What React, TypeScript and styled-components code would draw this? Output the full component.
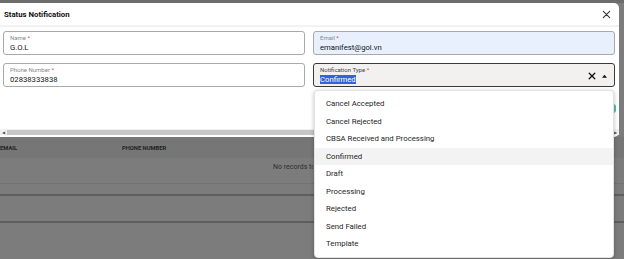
import React from "react";
import styled, { createGlobalStyle } from "styled-components";

const GlobalStyle = createGlobalStyle`
  html, body {
    margin: 0;
    padding: 0;
    background: #7c7c7c;
  }
  body {
    font-family: Roboto, "Liberation Sans", Arial, sans-serif;
  }
`;

const notificationTypes = [
  "Cancel Accepted",
  "Cancel Rejected",
  "CBSA Received and Processing",
  "Confirmed",
  "Draft",
  "Processing",
  "Rejected",
  "Send Failed",
  "Template",
];

const Screen = styled.div`
  position: relative;
  width: 624px;
  height: 259px;
  overflow: hidden;
  background: #7c7c7c;
  display: flex;
  flex-direction: column;
`;

const TopStrip = styled.div`
  height: 3px;
  background: #6c6c6c;
`;

const Modal = styled.div`
  width: 619px;
  height: 134px;
  background: #ffffff;
  border-radius: 0 5px 5px 0;
  display: flex;
  flex-direction: column;
`;

const Header = styled.div`
  height: 22px;
  display: flex;
  align-items: center;
  justify-content: space-between;
  padding: 0 8px 0 4px;
  border-bottom: 2px solid #f2f2f2;
`;

const Title = styled.div`
  font-size: 7.8px;
  font-weight: 700;
  color: #111;
`;

const CloseButton = styled.div`
  display: flex;
  align-items: center;
  color: #333;
`;

const Body = styled.div`
  display: grid;
  grid-template-columns: 302px 302px;
  column-gap: 8px;
  row-gap: 8px;
  padding: 4px 3px 0;
`;

const Field = styled.div<{ $tone?: "autofill" | "focus" }>`
  box-sizing: border-box;
  height: 24px;
  padding: 2px 6px 0;
  border-radius: 3px;
  border: ${({ $tone }) =>
    $tone === "focus" ? "1.5px solid #3a3a3a" : "1px solid #a9a9a9"};
  background: ${({ $tone }) =>
    $tone === "autofill" ? "#e8f0fe" : $tone === "focus" ? "#f2f1f0" : "#fff"};
  display: flex;
  flex-direction: column;
  position: relative;
`;

const Label = styled.div<{ $strong?: boolean }>`
  font-size: 6px;
  line-height: 7px;
  color: ${({ $strong }) => ($strong ? "#444" : "#8a8a8a")};
`;

const Star = styled.span`
  color: #e53935;
`;

const Value = styled.div`
  font-size: 7.7px;
  line-height: 11px;
  margin-top: 1px;
  color: #141414;
`;

const Selected = styled.span`
  background: #2f66d6;
  color: #fff;
`;

const Adornments = styled.div`
  position: absolute;
  right: 7px;
  top: 8px;
  display: flex;
  align-items: center;
  gap: 6px;
  color: #111;
`;

const ActionRow = styled.div`
  display: flex;
  justify-content: flex-end;
  padding: 17px 3px 0;
`;

const ActionButton = styled.div`
  width: 40px;
  height: 9px;
  border-radius: 3px;
  background: #4fc0b0;
`;

const Scrollbar = styled.div`
  margin-top: auto;
  margin-bottom: 2px;
  height: 6px;
  display: flex;
  align-items: center;
  gap: 2px;
  padding: 0 2px;
  background: #f1f1f1;
`;

const Arrow = styled.div`
  font-size: 4px;
  color: #555;
  width: 3px;
`;

const Thumb = styled.div`
  flex: 1;
  height: 5px;
  background: #c6c6c6;
`;

const Table = styled.div`
  display: flex;
  flex-direction: column;
`;

const TableHead = styled.div`
  height: 21px;
  display: flex;
  align-items: center;
  background: #767676;
`;

const HeadCell = styled.div<{ $width: number }>`
  width: ${({ $width }) => $width}px;
  font-size: 5.8px;
  font-weight: 700;
  color: #222;
`;

const EmptyRow = styled.div`
  box-sizing: border-box;
  height: 26px;
  padding: 5px 0 0 273px;
  border-bottom: 1px solid #727272;
`;

/* the rest of the message sits under the open dropdown */
const EmptyText = styled.div`
  width: 40px;
  overflow: hidden;
  white-space: nowrap;
  font-size: 7px;
  line-height: 9px;
  color: #2e2e2e;
`;

const DividerRow = styled.div<{ $height: number }>`
  height: ${({ $height }) => $height}px;
  border-bottom: 2px solid #5e5e5e;
`;

const Dropdown = styled.div`
  position: absolute;
  left: 314px;
  top: 90px;
  width: 300px;
  box-sizing: border-box;
  padding: 4px 0;
  background: #fff;
  border: 1px solid #e2e2e2;
  border-radius: 4px;
  box-shadow: 0 1px 4px rgba(0, 0, 0, 0.25);
`;

const Option = styled.div<{ $active?: boolean }>`
  height: 17.5px;
  display: flex;
  align-items: center;
  padding-left: 11px;
  font-size: 7.8px;
  color: #262626;
  background: ${({ $active }) => ($active ? "#f3f3f3" : "transparent")};
`;

const XIcon = ({ size, stroke }: { size: number; stroke: number }) => (
  <svg width={size} height={size} viewBox="0 0 10 10">
    <path
      d="M1.5 1.5 L8.5 8.5 M8.5 1.5 L1.5 8.5"
      stroke="currentColor"
      strokeWidth={stroke}
      strokeLinecap="round"
    />
  </svg>
);

const UpTriangle = () => (
  <svg width="5" height="4" viewBox="0 0 6 4">
    <path d="M0 4 L3 0.5 L6 4 Z" fill="currentColor" />
  </svg>
);

export default function App() {
  return (
    <Screen>
      <GlobalStyle />
      <TopStrip />
      <Modal>
        <Header>
          <Title>Status Notification</Title>
          <CloseButton>
            <XIcon size={9} stroke={1.2} />
          </CloseButton>
        </Header>
        <Body>
          <Field>
            <Label>
              Name <Star>*</Star>
            </Label>
            <Value>G.O.L</Value>
          </Field>
          <Field $tone="autofill">
            <Label>
              Email <Star>*</Star>
            </Label>
            <Value>emanifest@gol.vn</Value>
          </Field>
          <Field>
            <Label>
              Phone Number <Star>*</Star>
            </Label>
            <Value>02838333838</Value>
          </Field>
          <Field $tone="focus">
            <Label $strong>
              Notification Type <Star>*</Star>
            </Label>
            <Value>
              <Selected>Confirmed</Selected>
            </Value>
            <Adornments>
              <XIcon size={8} stroke={1.6} />
              <UpTriangle />
            </Adornments>
          </Field>
        </Body>
        <ActionRow>
          <ActionButton />
        </ActionRow>
        <Scrollbar>
          <Arrow>◀</Arrow>
          <Thumb />
          <Arrow>▶</Arrow>
        </Scrollbar>
      </Modal>
      <Table>
        <TableHead>
          <HeadCell $width={122}>EMAIL</HeadCell>
          <HeadCell $width={150}>PHONE NUMBER</HeadCell>
        </TableHead>
        <EmptyRow>
          <EmptyText>No records to display</EmptyText>
        </EmptyRow>
        <DividerRow $height={10} />
        <DividerRow $height={25} />
      </Table>
      <Dropdown>
        {notificationTypes.map((t) => (
          <Option key={t} $active={t === "Confirmed"}>
            {t}
          </Option>
        ))}
      </Dropdown>
    </Screen>
  );
}
